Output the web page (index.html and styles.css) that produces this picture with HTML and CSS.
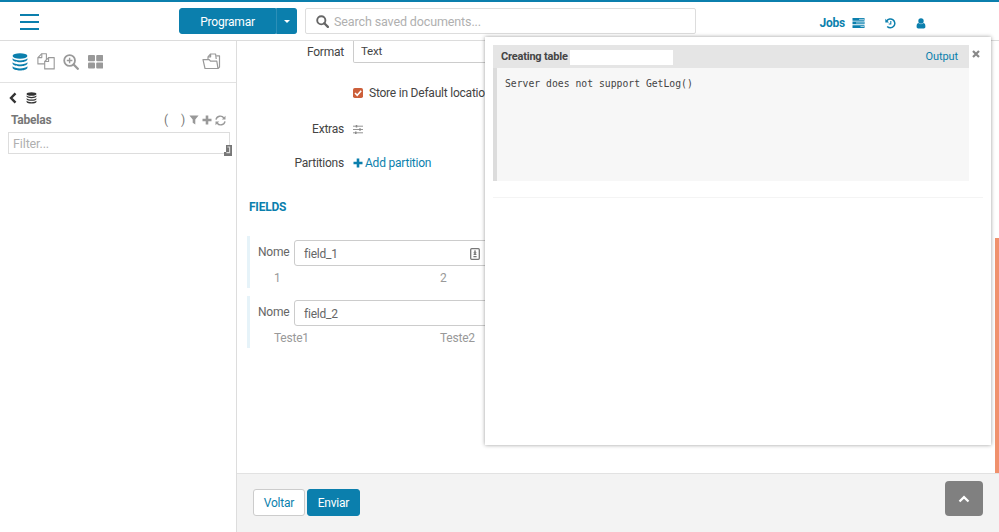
FILE: index.html
```html
<!DOCTYPE html>
<html lang="pt">
<head>
    <meta charset="UTF-8">
    <meta name="viewport" content="width=device-width, initial-scale=1.0">
    <title>Tabelas</title>
    <link rel="stylesheet" href="styles.css">
</head>
<body>
    <svg class="sprite" width="0" height="0">
        <symbol id="icon-database" viewBox="0 0 16 18">
            <ellipse cx="8" cy="3" rx="7.4" ry="2.7"/>
            <path d="M.6 5.3c2 2.8 12.8 2.8 14.8 0v1.5c-1.2 3.3-13.6 3.3-14.8 0z"/>
            <path d="M.6 9.3c2 2.8 12.8 2.8 14.8 0v1.5c-1.2 3.3-13.6 3.3-14.8 0z"/>
            <path d="M.6 13.3c2 2.8 12.8 2.8 14.8 0v1.6c-1.2 3.3-13.6 3.3-14.8 0z"/>
        </symbol>
        <symbol id="icon-plus" viewBox="0 0 10 10">
            <path d="M3.7.5h2.6v3.2h3.2v2.6H6.3v3.2H3.7V6.3H.5V3.7h3.2z"/>
        </symbol>
    </svg>

    <header class="navbar">
        <button class="hamburger" aria-label="Menu"><span></span><span></span><span></span></button>
        <div class="btn-group">
            <button class="btn-primary btn-main">Programar</button>
            <button class="btn-primary btn-caret" aria-label="Mais"><span class="caret"></span></button>
        </div>
        <div class="search">
            <svg width="13" height="13" viewBox="0 0 13 13"><circle cx="5.3" cy="5.3" r="4.1" fill="none" stroke="#666" stroke-width="1.9"/><path d="M8.3 8.3l3.6 3.6" stroke="#666" stroke-width="2.3" stroke-linecap="round"/></svg>
            <input type="text" placeholder="Search saved documents...">
        </div>
        <nav class="nav-right">
            <a class="jobs">Jobs
                <svg width="13" height="10" viewBox="0 0 13 10"><path fill="#0b7fad" d="M.5 0h12v2.7H.5zM.5 3.6h12v2.7H.5zM.5 7.2h12v2.7H.5z"/><path d="M7 1.35h5M4 4.95h8M8.5 8.55H12" stroke="#b5dceb" stroke-width=".9"/></svg>
            </a>
            <svg class="history" width="11" height="11" viewBox="0 0 11 11" fill="none" stroke="#0b7fad"><path d="M1.7 3A4.4 4.4 0 1 1 2.2 8.4" stroke-width="1.5"/><path d="M.3.8v3.7H4z" fill="#0b7fad" stroke="none"/><path d="M5.8 3v3H3.7" stroke-width="1.1"/></svg>
            <svg class="user" width="10" height="11" viewBox="0 0 10 11" fill="#0b7fad"><circle cx="5" cy="3" r="2.7"/><path d="M2.5 5.1C.8 5.5.6 7 .6 8.7.6 9.9 1.3 10.4 2.2 10.4h5.6c.9 0 1.6-.5 1.6-1.7 0-1.7-.2-3.2-1.9-3.6C6 6.6 4 6.6 2.5 5.1z"/></svg>
        </nav>
    </header>

    <div class="layout">
        <aside class="sidebar">
            <div class="assist-tabs">
                <svg class="tab-db" width="16" height="18"><use href="#icon-database"/></svg>
                <svg class="tab-docs" width="18" height="17" viewBox="0 0 18 17" fill="#fff" stroke="#999" stroke-width="1.1" stroke-linejoin="round"><path d="M4.8.7h4.6v10.2H.9V4.6z"/><path d="M4.8.7v3.9H.9" fill="none"/><path d="M11.6 4.6h5.6v11.3H7.7V8.5z"/><path d="M11.6 4.6v3.9H7.7" fill="none"/></svg>
                <svg class="tab-zoom" width="16" height="16" viewBox="0 0 16 16" fill="none" stroke="#999"><circle cx="6.6" cy="6.5" r="5.4" stroke-width="1.8"/><path d="M10.6 10.5l4.2 4.3" stroke-width="2.3" stroke-linecap="round"/><path d="M6.6 3.7v5.6M3.8 6.5h5.6" stroke-width="1.4"/></svg>
                <svg class="tab-grid" width="15" height="14" viewBox="0 0 15 14" fill="#999"><rect width="7" height="6.2" rx="1"/><rect x="8.2" width="7" height="6.2" rx="1"/><rect y="7.4" width="7" height="6.2" rx="1"/><rect x="8.2" y="7.4" width="7" height="6.2" rx="1"/></svg>
                <svg class="tab-folder" width="19" height="17" viewBox="0 0 19 17" fill="none" stroke="#999" stroke-width="1.2" stroke-linejoin="round"><path d="M6 6.4V3.8L8.6 1h5l.6 5"/><path d="M8.6 1v2.8H6"/><path d="M1 6.6h6.2l1.3 1.6h6.3l1.2 7.3H3z"/><path d="M14.2 2.8h3.3v11.2L16 15.5"/></svg>
            </div>
            <div class="breadcrumb">
                <svg width="8" height="12" viewBox="0 0 8 12"><path d="M6.5 1.3L2 6l4.5 4.7" fill="none" stroke="#333" stroke-width="2.4"/></svg>
                <svg width="11" height="12"><use href="#icon-database"/></svg>
            </div>
            <div class="tables-header">
                <span class="tables-title">Tabelas</span>
                <span class="tables-count"><span>(</span><span>)</span></span>
                <svg class="filter" width="10" height="10" viewBox="0 0 10 10"><path d="M.4.5h9.2L6.3 4.6v5L3.7 7.8V4.6z"/></svg>
                <svg class="plus" width="10" height="10"><use href="#icon-plus"/></svg>
                <svg width="11" height="11" viewBox="0 0 11 11"><path d="M1 4.7A4.4 4.4 0 0 1 8.9 3M10 6.3A4.4 4.4 0 0 1 2.1 8" fill="none" stroke="#999" stroke-width="1.4"/><path d="M10.5.8v3.7H6.8zM.5 10.2V6.5h3.7z"/></svg>
            </div>
            <div class="filter-box">
                <input type="text" placeholder="Filter...">
                <svg class="resizer" width="8" height="11" viewBox="0 0 8 11"><path d="M2 0h6v11H0V7h2z" fill="#777"/><path d="M3.4 2h2.2v5.6H2.4" fill="none" stroke="#ddd" stroke-width="1.1"/></svg>
            </div>
        </aside>

        <main class="content">
            <div class="form-area">
                <div class="form-row format">
                    <label>Format</label>
                    <div class="select">Text</div>
                </div>
                <div class="form-row store">
                    <label></label>
                    <svg width="10" height="10" viewBox="0 0 10 10"><rect width="10" height="10" rx="1.8" fill="#cc5f3a"/><path d="M2 5l2.2 2.3L8.2 2.8" fill="none" stroke="#fff" stroke-width="1.6"/></svg>
                    <span>Store in Default location</span>
                </div>
                <div class="form-row extras">
                    <label>Extras</label>
                    <svg width="10" height="9" viewBox="0 0 10 9" stroke="#888"><path d="M0 1.2h10M0 4.5h10M0 7.8h10" stroke-width=".9"/><path d="M3.5 0v2.4M7 3.3v2.4M2.8 6.6V9" stroke-width="1.5"/></svg>
                </div>
                <div class="form-row partitions">
                    <label>Partitions</label>
                    <a class="link"><svg width="10" height="10"><use href="#icon-plus"/></svg>Add partition</a>
                </div>
                <h4>FIELDS</h4>
                <div class="field">
                    <div class="field-name">
                        <label>Nome</label>
                        <div class="field-input">
                            <span>field_1</span>
                            <svg width="10" height="12" viewBox="0 0 10 12" fill="none" stroke="#777"><rect x=".7" y=".7" width="8.6" height="10.6" rx="1" stroke-width="1.3"/><path d="M5 2.3v3M3.6 6.5h2.8M3.4 8.6h3.2" stroke-width="1.2"/><circle cx="5" cy="4.8" r=".9"/></svg>
                        </div>
                    </div>
                    <div class="samples"><span>1</span><span>2</span></div>
                </div>
                <div class="field">
                    <div class="field-name">
                        <label>Nome</label>
                        <div class="field-input"><span>field_2</span></div>
                    </div>
                    <div class="samples"><span>Teste1</span><span>Teste2</span></div>
                </div>
            </div>
            <div class="form-actions">
                <button class="btn btn-back">Voltar</button>
                <button class="btn btn-primary">Enviar</button>
                <button class="scroll-top" aria-label="Topo"><svg width="12" height="8" viewBox="0 0 12 8"><path d="M1.5 6.5L6 2.2l4.5 4.3" fill="none" stroke="#fff" stroke-width="2.3"/></svg></button>
            </div>
        </main>
    </div>

    <div class="scroll-mark"></div>

    <section class="jobs-panel">
        <div class="job-row">
            <div class="job">
                <div class="job-header">
                    <strong>Creating table</strong>
                    <span class="job-name"></span>
                    <a class="link">Output</a>
                </div>
                <pre class="job-log">Server does not support GetLog()</pre>
            </div>
            <svg class="close" width="8" height="8" viewBox="0 0 8 8"><path d="M1 1l6 6M7 1L1 7" stroke="#888" stroke-width="2.2"/></svg>
        </div>
    </section>
</body>
</html>
```
FILE: styles.css
```css
* {
    box-sizing: border-box;
}

body {
    margin: 0;
    height: 532px;
    overflow: hidden;
    position: relative;
    font-family: Roboto, Arial, sans-serif;
    font-size: 12px;
    letter-spacing: -0.22px;
    line-height: 16px;
    color: #444;
    background: #fff;
}

svg {
    display: block;
    flex: none;
}

.sprite {
    position: absolute;
}

button, input {
    font: inherit;
    letter-spacing: inherit;
}

input::placeholder {
    color: #b0b0b0;
    opacity: 1;
}

.link {
    color: #0b7fad;
}

/* navbar */
.navbar {
    height: 41px;
    border-top: 2px solid #0b7fad;
    border-bottom: 1px solid #dcdcdc;
    display: flex;
    align-items: flex-start;
    padding: 6px 73px 0 20px;
}

.hamburger {
    width: 19px;
    height: 16px;
    margin: 6px 140px 0 0;
    padding: 0;
    border: none;
    background: none;
    display: flex;
    flex-direction: column;
    justify-content: space-between;
}

.hamburger span {
    height: 2px;
    background: #0b7fad;
}

.btn-group {
    display: flex;
    width: 118px;
    height: 26px;
    margin-right: 8px;
}

.btn-primary {
    background: #0b7fad;
    border: 1px solid #0b7fad;
    color: #fff;
}

.btn-main {
    width: 97px;
    padding: 1px 0 0;
    border-radius: 3px 0 0 3px;
}

.btn-caret {
    width: 21px;
    padding: 0;
    border-left-color: #2c8fb8;
    border-radius: 0 3px 3px 0;
    display: flex;
    align-items: center;
    justify-content: center;
}

.caret {
    border: 3px solid transparent;
    border-top-color: #fff;
    border-bottom: none;
}

.search {
    width: 391px;
    height: 26px;
    border: 1px solid #ddd;
    border-radius: 2px;
    display: flex;
    align-items: center;
    padding-left: 10px;
    gap: 5px;
}

.search input {
    flex: 1;
    min-width: 0;
    border: none;
    padding: 1px 0 0;
    outline: none;
    font-size: 12.5px;
    letter-spacing: -0.12px;
}

.nav-right {
    margin-left: auto;
    height: 30px;
    display: flex;
    align-items: center;
    color: #0b7fad;
}

.jobs {
    display: flex;
    align-items: center;
    gap: 7px;
    font-weight: 700;
}

.history {
    margin-left: 20px;
}

.user {
    margin-left: 20px;
}

/* sidebar */
.layout {
    display: flex;
    height: 491px;
}

.sidebar {
    width: 237px;
    border-right: 1px solid #ddd;
    color: #777;
}

.assist-tabs {
    height: 42px;
    border-bottom: 1px solid #e2e2e2;
    display: flex;
    align-items: center;
    padding: 0 15px 0 12px;
}

.tab-db {
    fill: #0b7fad;
}

.tab-docs {
    margin-left: 9px;
}

.tab-zoom {
    margin-left: 8px;
}

.tab-grid {
    margin-left: 9px;
}

.tab-folder {
    margin-left: auto;
}

.breadcrumb {
    display: flex;
    align-items: center;
    gap: 9px;
    padding: 9px 0 0 9px;
    fill: #333;
}

.tables-header {
    display: flex;
    align-items: center;
    height: 16px;
    margin: 8px 10px 0 11px;
    gap: 3px;
    fill: #999;
}

.tables-title {
    font-weight: 700;
}

.tables-count {
    display: flex;
    justify-content: space-between;
    width: 21px;
    margin-left: auto;
}

.filter {
    margin-left: 1px;
}

.filter-box {
    position: relative;
    margin: 4px 6px 0 8px;
}

.filter-box input {
    display: block;
    width: 222px;
    height: 22px;
    border: 1px solid #ddd;
    padding: 1px 4px 0;
    font-size: 12.5px;
    letter-spacing: -0.12px;
}

.resizer {
    position: absolute;
    right: -2px;
    bottom: -2px;
}

/* create table form */
.content {
    flex: 1;
    min-width: 0;
    display: flex;
    flex-direction: column;
}

.form-area {
    height: 432px;
    overflow: hidden;
}

.form-row {
    display: flex;
    align-items: center;
    height: 16px;
}

.form-row label {
    width: 107px;
    margin-right: 9px;
    text-align: right;
}

.format {
    height: 22px;
}

.select {
    width: 220px;
    height: 22px;
    border: 1px solid #ccc;
    border-top: none;
    border-radius: 0 0 2px 2px;
    padding: 2px 7px;
    font-size: 11.5px;
}

.store {
    margin-top: 22px;
}

.store span {
    margin-left: 6px;
}

.extras {
    margin-top: 20px;
}

.partitions {
    margin-top: 18px;
}

.partitions .link {
    display: flex;
    align-items: center;
    gap: 2px;
    fill: #0b7fad;
}

h4 {
    margin: 28px 0 21px 12px;
    font-size: 12px;
    font-weight: 700;
    line-height: 16px;
    color: #0b7fad;
}

.field {
    height: 52px;
    margin: 0 0 8px 10px;
    border-left: 3px solid #e6f3f9;
    padding-top: 4px;
    color: #666;
}

.field-name {
    display: flex;
    align-items: flex-start;
}

.field-name label {
    width: 37px;
    padding: 4px 0 0 8px;
    margin-right: 7px;
}

.field-input {
    width: 240px;
    height: 26px;
    border: 1px solid #ccc;
    border-radius: 3px;
    padding: 1px 9px 0;
    display: flex;
    align-items: center;
}

.field-input span {
    width: 166px;
}

.samples {
    display: flex;
    padding: 4px 0 0 24px;
    color: #999;
}

.samples span {
    width: 166px;
}

.form-actions {
    flex: 1;
    display: flex;
    align-items: flex-start;
    gap: 2px;
    padding: 15px 16px 0 16px;
    background: #f3f3f3;
    border-top: 1px solid #e2e2e2;
}

.btn {
    width: 53px;
    height: 27px;
    padding: 1px 0 0;
    border-radius: 3px;
}

.btn-back {
    width: 52px;
    background: #fff;
    border: 1px solid #ccc;
    color: #0b7fad;
}

.scroll-top {
    width: 38px;
    height: 35px;
    margin: -8px 0 0 auto;
    padding: 0;
    border: none;
    border-radius: 4px;
    background: #808080;
    display: flex;
    align-items: center;
    justify-content: center;
}

.scroll-mark {
    position: absolute;
    top: 238px;
    right: 0;
    width: 4px;
    height: 235px;
    background: #f0916d;
}

/* floating jobs panel */
.jobs-panel {
    position: absolute;
    top: 37px;
    left: 485px;
    width: 506px;
    height: 408px;
    padding: 8px;
    background: #fff;
    box-shadow: 0 0 4px rgba(0, 0, 0, 0.4);
}

.job-row {
    display: flex;
    align-items: flex-start;
    gap: 3px;
    height: 153px;
    border-bottom: 1px solid #f4f4f4;
}

.job {
    width: 476px;
}

.job-header {
    height: 23px;
    padding: 1px 11px 0 8px;
    display: flex;
    align-items: center;
    background: #e5e5e5;
    font-size: 11px;
    letter-spacing: -0.1px;
}

.job-header strong {
    width: 67px;
    font-weight: 700;
    letter-spacing: -0.2px;
    white-space: nowrap;
}

.job-name {
    width: 103px;
    height: 15px;
    margin-left: 2px;
    background: #fff;
}

.job-header .link {
    margin-left: auto;
}

.job-log {
    height: 113px;
    margin: 0;
    padding: 8px;
    border-left: 4px solid #dcdcdc;
    background: #f7f7f7;
    font-family: "DejaVu Sans Mono", monospace;
    font-size: 9.75px;
    letter-spacing: 0;
    line-height: 16px;
}

.close {
    margin-top: 5px;
}
```
